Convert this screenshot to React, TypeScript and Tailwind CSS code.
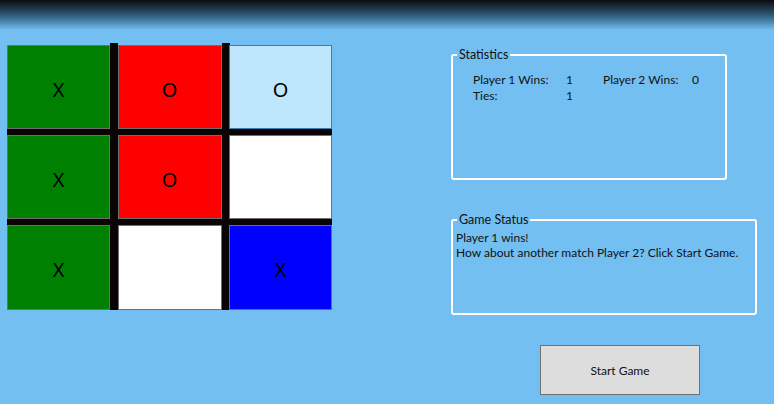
import React from "react";

type Cell = { mark: string; bg: string; border: string };

const cells: Cell[] = [
  { mark: "X", bg: "bg-[#008000]", border: "border-[#6f6f6f]" },
  { mark: "O", bg: "bg-[#ff0000]", border: "border-[#6f6f6f]" },
  { mark: "O", bg: "bg-[#bee6fd]", border: "border-[#3c7fb1]" },
  { mark: "X", bg: "bg-[#008000]", border: "border-[#6f6f6f]" },
  { mark: "O", bg: "bg-[#ff0000]", border: "border-[#6f6f6f]" },
  { mark: "", bg: "bg-white", border: "border-[#6f6f6f]" },
  { mark: "X", bg: "bg-[#008000]", border: "border-[#6f6f6f]" },
  { mark: "", bg: "bg-white", border: "border-[#6f6f6f]" },
  { mark: "X", bg: "bg-[#0000ff]", border: "border-[#6f6f6f]" },
];

const Board = () => (
  <div className="relative mt-[15px] w-[325px] h-[265px] bg-[#0a0404] grid grid-cols-[103px_104px_103px] grid-rows-[84px_84px_85px] gap-x-[7.5px] gap-y-[6px]">
    {cells.map((c, i) => (
      <div
        key={i}
        className={`${c.bg} ${c.border} border flex items-center justify-center pt-[5px] text-[20px] text-black`}
        style={{ fontFamily: '"Noto Sans", sans-serif' }}
      >
        {c.mark}
      </div>
    ))}
    {/* splitters poke out a little past the board */}
    <span className="absolute left-[103px] -top-[2px] w-[8px] h-[2px] bg-[#0a0404]" />
    <span className="absolute left-[215px] -top-[2px] w-[8px] h-[2px] bg-[#0a0404]" />
  </div>
);

const GroupBox: React.FC<{ title: string; className: string; children: React.ReactNode }> = ({
  title,
  className,
  children,
}) => (
  <fieldset className={`border-2 border-white rounded-[3px] ${className}`}>
    <legend className="ml-[4px] px-[2px] leading-[14px] text-[12.5px]">{title}</legend>
    {children}
  </fieldset>
);

export default function App() {
  return (
    <div
      className="w-[774px] h-[404px] bg-[#73bff1] flex flex-col text-[#111] overflow-hidden"
      style={{ fontFamily: 'Lato, "Noto Sans", sans-serif' }}
    >
      <div className="h-[30px] shrink-0 bg-linear-to-b from-[#0b0d10] via-[#2f5a78] to-[#73bff1]" />
      <div className="flex pl-[7px]">
        <Board />
        <div className="ml-[119px] flex flex-col">
          <GroupBox title="Statistics" className="mt-[18px] w-[276px] h-[132px]">
            <div className="grid grid-cols-[93px_37px_89px_auto] pl-[20px] pt-[10px] text-[12px] leading-[16px] whitespace-nowrap">
              <span>Player 1 Wins:</span>
              <span>1</span>
              <span>Player 2 Wins:</span>
              <span>0</span>
              <span>Ties:</span>
              <span>1</span>
            </div>
          </GroupBox>
          <GroupBox title="Game Status" className="mt-[33px] w-[306px] h-[102px]">
            <div className="pl-[3px] pt-[3px] text-[12px] leading-[15px] whitespace-nowrap">
              <p>Player 1 wins!</p>
              <p>How about another match Player 2? Click Start Game.</p>
            </div>
          </GroupBox>
          <button className="mt-[30px] ml-[89px] w-[160px] h-[50px] pt-[2px] bg-[#dddddd] border border-[#707070] text-[12px] text-[#111]">
            Start Game
          </button>
        </div>
      </div>
    </div>
  );
}
